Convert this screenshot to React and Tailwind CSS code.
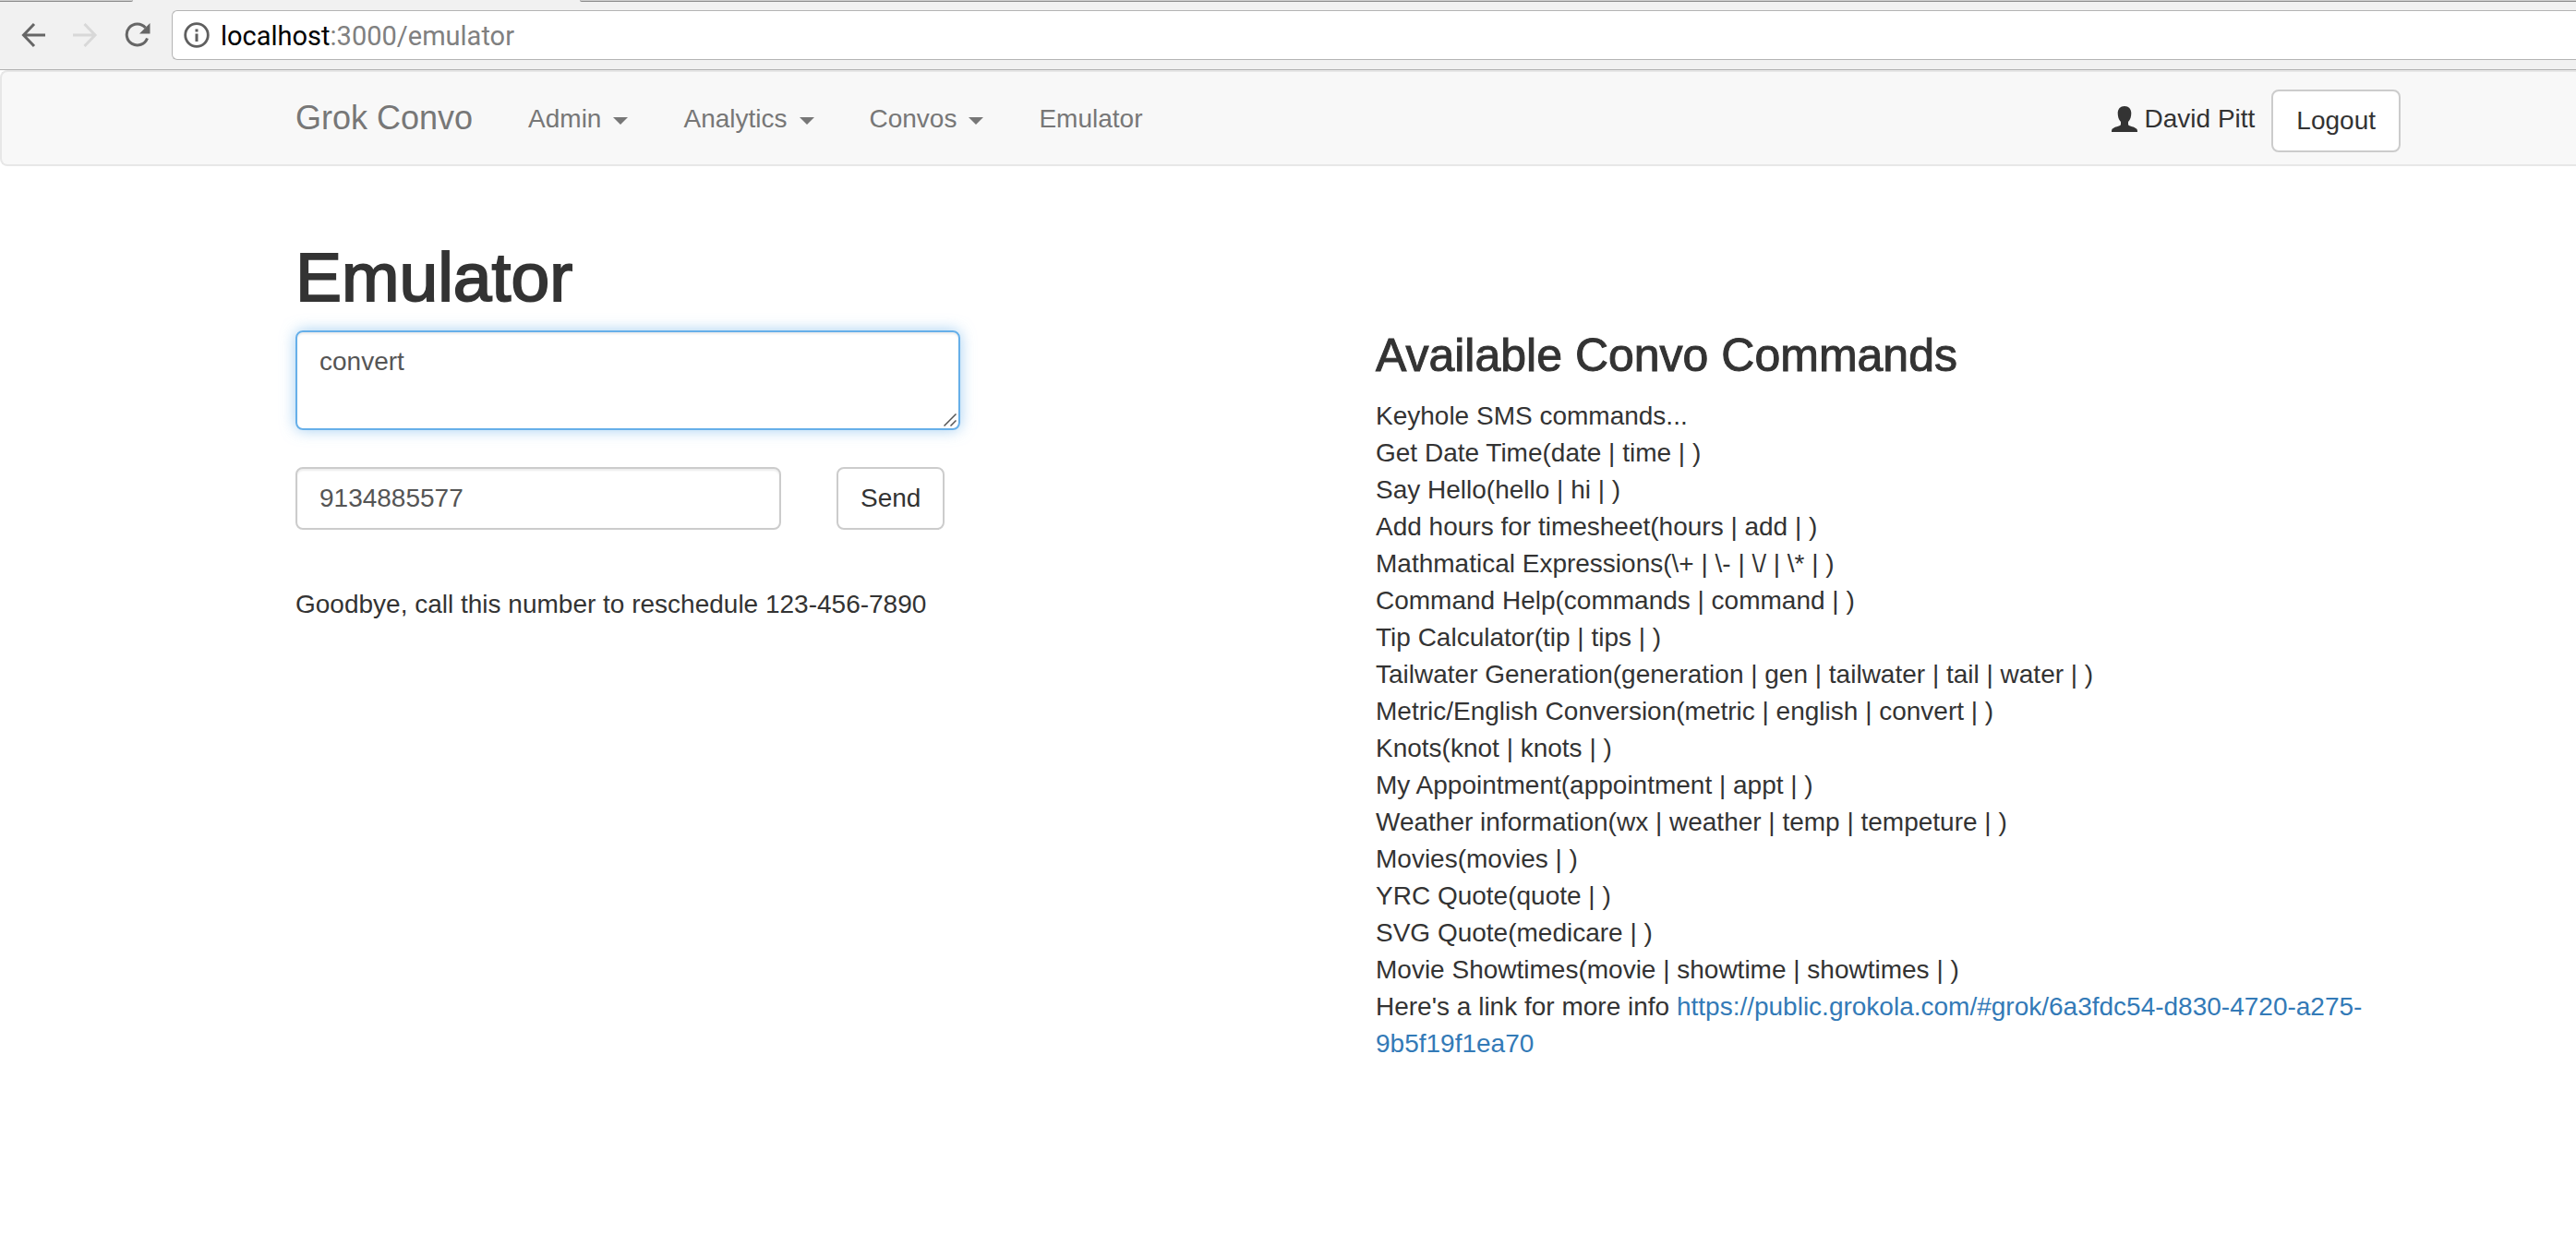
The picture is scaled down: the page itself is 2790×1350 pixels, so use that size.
import { useState } from "react";

const COMMANDS = [
  "Keyhole SMS commands...",
  "Get Date Time(date | time | )",
  "Say Hello(hello | hi | )",
  "Add hours for timesheet(hours | add | )",
  "Mathmatical Expressions(\\+ | \\- | \\/ | \\* | )",
  "Command Help(commands | command | )",
  "Tip Calculator(tip | tips | )",
  "Tailwater Generation(generation | gen | tailwater | tail | water | )",
  "Metric/English Conversion(metric | english | convert | )",
  "Knots(knot | knots | )",
  "My Appointment(appointment | appt | )",
  "Weather information(wx | weather | temp | tempeture | )",
  "Movies(movies | )",
  "YRC Quote(quote | )",
  "SVG Quote(medicare | )",
  "Movie Showtimes(movie | showtime | showtimes | )",
];

const MENUS = [
  { label: "Admin", caret: true },
  { label: "Analytics", caret: true },
  { label: "Convos", caret: true },
  { label: "Emulator", caret: false },
];

function BrowserBar() {
  return (
    <header className="bg-[#f1f1f1] border-b border-[#b0b0b0]">
      <div className="flex h-0.5 justify-between" aria-hidden="true">
        <div className="w-36 rounded-br-sm border-b border-[#8c8c8c] bg-[#cfcfcf]" />
        <div className="ml-[484px] flex-1 rounded-bl-sm border-b border-[#8c8c8c] bg-[#cfcfcf]" />
      </div>
      <div className="flex items-center pt-[9px] pb-[10px]">
        <div className="flex items-center gap-7 px-[23px]">
          <button type="button" aria-label="Back" className="block">
            <svg width="28" height="28" viewBox="0 0 28 28" fill="none" stroke="#666" strokeWidth="3">
              <path d="M26 14H3M14 2L2.500 14 14 26" />
            </svg>
          </button>
          <button type="button" aria-label="Forward" className="block">
            <svg width="28" height="28" viewBox="0 0 28 28" fill="none" stroke="#d8d8d8" strokeWidth="3">
              <path d="M0 14h24M12.500 2L24 14 12.500 26" />
            </svg>
          </button>
          <button type="button" aria-label="Reload" className="block">
            <svg width="28" height="28" viewBox="0 0 28 28">
              <path d="M24.5 17.5A11.5 11.5 0 1 1 22.5 6" fill="none" stroke="#666" strokeWidth="3" />
              <path d="M27.5 1v11.5H16z" fill="#666" />
            </svg>
          </button>
        </div>
        <div className="flex h-[54px] flex-1 items-center rounded-l-md border border-r-0 border-[#b4b4b4] bg-white pl-3">
          <svg width="28" height="28" viewBox="0 0 28 28" aria-hidden="true">
            <circle cx="14" cy="14" r="12.300" fill="none" stroke="#5f5f5f" strokeWidth="2.800" />
            <path d="M12.500 7.500h3v3h-3zM12.500 12.500h3v8.500h-3z" fill="#5f5f5f" />
          </svg>
          <p className="ml-3 pt-0.5 font-[Roboto,sans-serif] text-[29px] leading-8 text-[#808080]">
            <span className="text-black">localhost</span>:3000/emulator
          </p>
        </div>
      </div>
    </header>
  );
}

function Navbar() {
  return (
    <nav className="rounded-l-lg border-2 border-r-0 border-[#e7e7e7] bg-[#f8f8f8] pl-32">
      <div className="mx-auto flex h-[100px] max-w-[2340px] items-center px-[30px]">
        <a href="#home" className="mr-[30px] text-[36px] leading-10 text-[#777]">
          Grok Convo
        </a>
        <ul className="flex items-center pt-px">
          {MENUS.map((m) => (
            <li key={m.label}>
              <button type="button" className="flex items-center px-[30px] text-[28px] leading-10 text-[#777]">
                {m.label}
                {m.caret && (
                  <svg className="ml-[13px] mt-1" width="16" height="8" viewBox="0 0 16 8" fill="#777" aria-hidden="true">
                    <path d="M0 0h16L8 8z" />
                  </svg>
                )}
              </button>
            </li>
          ))}
        </ul>
        <div className="ml-auto flex items-center pt-1.5">
          <div className="flex items-center pb-1">
            <svg width="28" height="28" viewBox="0 0 28 28" fill="#333" aria-hidden="true">
              <path d="M14 0c4.500 0 7.300 3 7.300 7.500 0 3.500-.8 7-3.300 9.500v2.500c0 1 .6 1.400 1.500 1.700 3.500 1.200 7.500 2.300 8.200 4.300.2.600.3 1.500.3 2.500H0c0-1 .1-1.900.3-2.500.7-2 4.700-3.100 8.200-4.300.9-.3 1.500-.7 1.500-1.700V17c-2.500-2.500-3.300-6-3.300-9.500C6.700 3 9.500 0 14 0z" />
            </svg>
            <span className="ml-2 mr-[18px] text-[28px] leading-10 text-[#333]">David Pitt</span>
          </div>
          <button type="button" className="h-[68px] rounded-lg border-2 border-[#ccc] bg-white px-[25px] text-[28px] leading-10 text-[#333]">
            Logout
          </button>
        </div>
      </div>
    </nav>
  );
}

export default function App() {
  const [message, setMessage] = useState("convert");
  const [phone, setPhone] = useState("9134885577");
  return (
    <div className="min-h-screen bg-white font-['Liberation_Sans',Arial,sans-serif] text-[28px] leading-10 text-[#333]">
      <BrowserBar />
      <Navbar />
      <div className="pl-[130px]">
        <main className="mx-auto grid max-w-[2340px] grid-cols-2 gap-x-[60px] px-[30px] pt-20">
          <section>
            <h1 className="text-[75px] leading-20 [-webkit-text-stroke:2px_#333]">Emulator</h1>
            <form className="mt-[18px]" onSubmit={(e) => e.preventDefault()}>
              <div className="relative w-[720px]">
                <textarea
                  aria-label="Message"
                  className="block h-[108px] w-full resize-none rounded-lg border-2 border-[#66afe9] px-6 py-3 leading-10 text-[#555] shadow-[inset_0_2px_2px_rgba(0,0,0,0.075),0_0_16px_rgba(102,175,233,0.6)] outline-none"
                  value={message}
                  onChange={(e) => setMessage(e.target.value)}
                />
                <svg
                  className="pointer-events-none absolute right-1 bottom-1"
                  width="14"
                  height="14"
                  viewBox="0 0 14 14"
                  stroke="#555"
                  strokeWidth="1.500"
                  aria-hidden="true"
                >
                  <path d="M.5 13.500l13-13M7.500 13.500l6-6" />
                </svg>
              </div>
              <div className="mt-10 flex gap-[60px]">
                <input
                  aria-label="Phone number"
                  className="h-[68px] w-[526px] rounded-lg border-2 border-[#ccc] px-6 text-[#555] shadow-[inset_0_2px_2px_rgba(0,0,0,0.075)] outline-none"
                  value={phone}
                  onChange={(e) => setPhone(e.target.value)}
                />
                <button type="submit" className="h-[68px] rounded-lg border-2 border-[#ccc] bg-white px-6">
                  Send
                </button>
              </div>
            </form>
            <p className="mt-[61px]">Goodbye, call this number to reschedule 123-456-7890</p>
          </section>
          <section className="pt-[99px]">
            <h2 className="mb-5 text-[50px] leading-[52px] [-webkit-text-stroke:1px_#333]">Available Convo Commands</h2>
            <ul>
              {COMMANDS.map((c) => (
                <li key={c}>{c}</li>
              ))}
            </ul>
            <p>
              Here's a link for more info{" "}
              <a href="https://public.grokola.com/#grok/6a3fdc54-d830-4720-a275-9b5f19f1ea70" className="text-[#337ab7]">
                https://public.grokola.com/#grok/6a3fdc54-d830-4720-a275-9b5f19f1ea70
              </a>
            </p>
          </section>
        </main>
      </div>
    </div>
  );
}
